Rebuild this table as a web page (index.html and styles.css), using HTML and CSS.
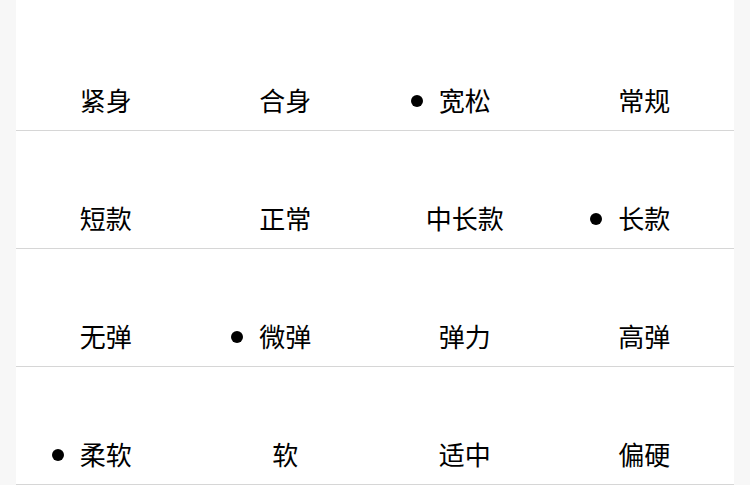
FILE: index.html
```html
<!DOCTYPE html>
<html lang="zh">
<head>
<meta charset="utf-8">
<link rel="stylesheet" href="styles.css">
</head>
<body>
<div class="panel">
  <div class="row">
    <div class="cell"><span class="opt">紧身</span></div>
    <div class="cell"><span class="opt">合身</span></div>
    <div class="cell"><span class="opt on">宽松</span></div>
    <div class="cell"><span class="opt">常规</span></div>
  </div>
  <div class="row">
    <div class="cell"><span class="opt">短款</span></div>
    <div class="cell"><span class="opt">正常</span></div>
    <div class="cell"><span class="opt">中长款</span></div>
    <div class="cell"><span class="opt on">长款</span></div>
  </div>
  <div class="row">
    <div class="cell"><span class="opt">无弹</span></div>
    <div class="cell"><span class="opt on">微弹</span></div>
    <div class="cell"><span class="opt">弹力</span></div>
    <div class="cell"><span class="opt">高弹</span></div>
  </div>
  <div class="row">
    <div class="cell"><span class="opt on">柔软</span></div>
    <div class="cell"><span class="opt">软</span></div>
    <div class="cell"><span class="opt">适中</span></div>
    <div class="cell"><span class="opt">偏硬</span></div>
  </div>
</div>
</body>
</html>
```
FILE: styles.css
```css
html, body {
  margin: 0;
  padding: 0;
  background: #f7f7f7;
}
body {
  padding: 0 16px;
  font-family: "Noto Sans CJK SC", "Noto Sans", sans-serif;
  color: #000;
}
.panel {
  background: #fff;
  padding-top: 13px;
  height: 485px;
  box-sizing: border-box;
}
.row {
  display: grid;
  grid-template-columns: repeat(4, 1fr);
  height: 103px;
  align-items: end;
  padding-bottom: 14px;
  border-bottom: 1px solid #d6d6d6;
}
.cell {
  text-align: center;
}
.opt {
  position: relative;
  font-size: 26px;
  line-height: 26px;
  display: inline-block;
}
.opt.on::before {
  content: "";
  position: absolute;
  left: -28px;
  top: 50%;
  width: 12px;
  height: 12px;
  margin-top: -5px;
  border-radius: 50%;
  background: #000;
}
```
